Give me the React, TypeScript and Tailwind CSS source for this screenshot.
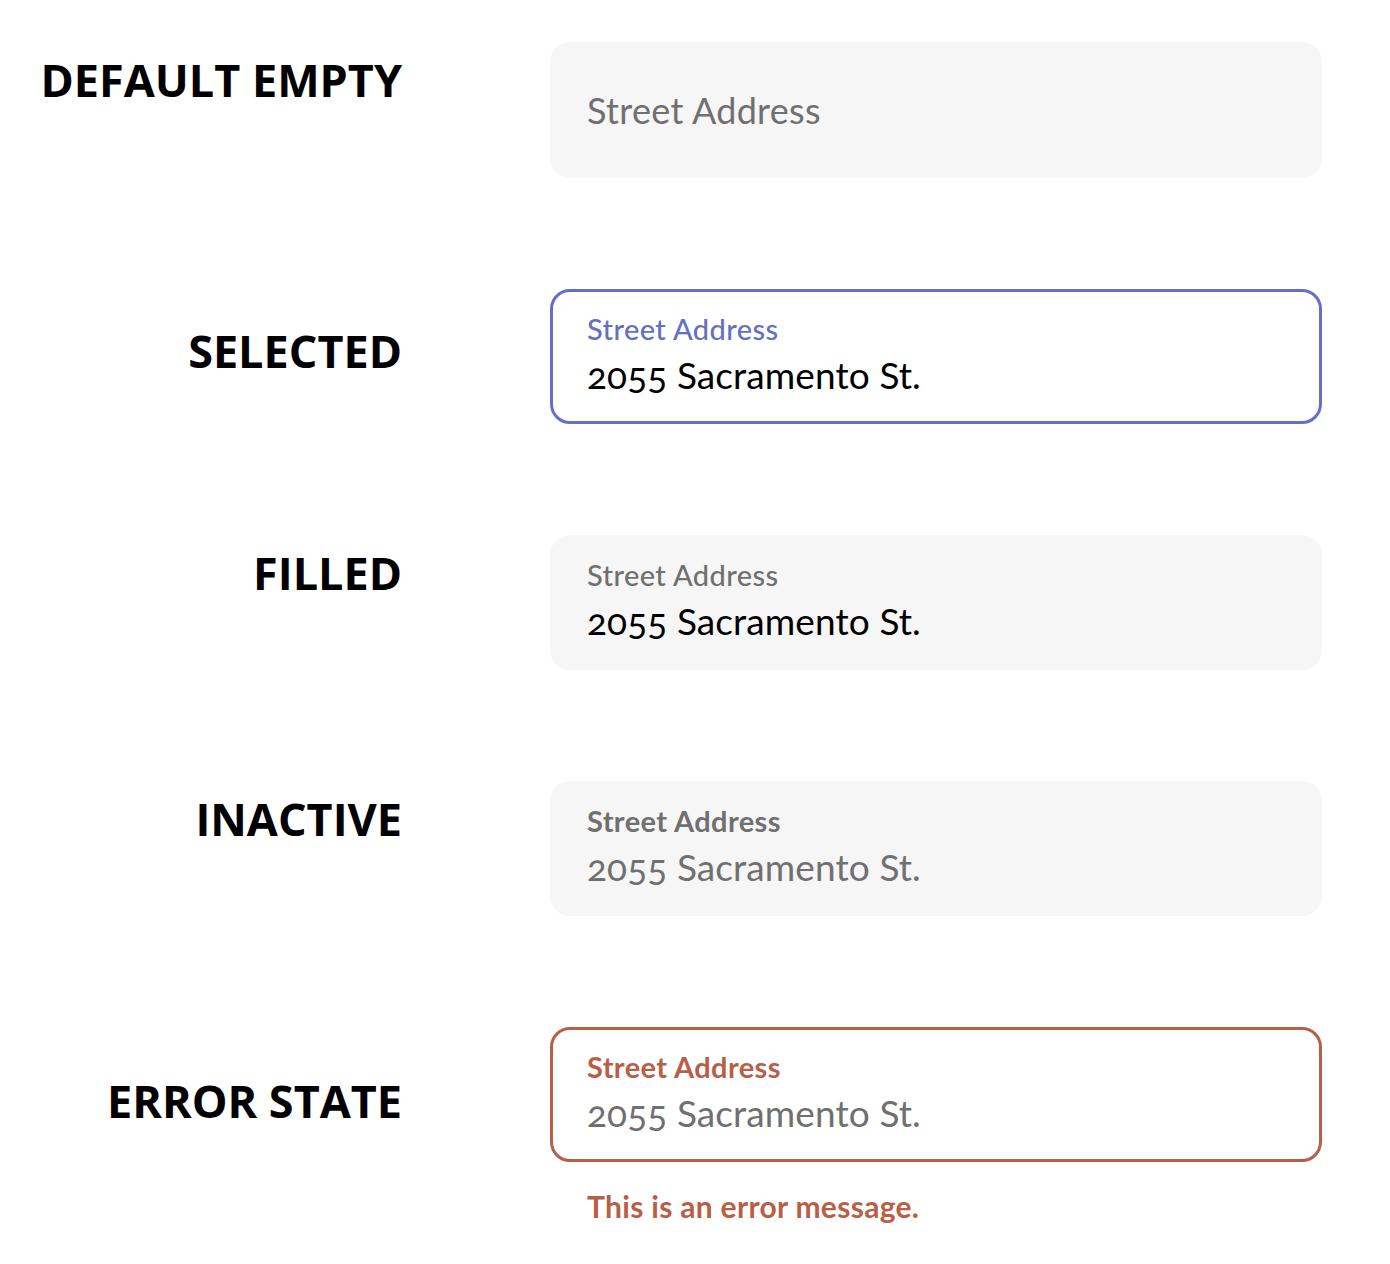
import React from "react"

type FieldState = "empty" | "selected" | "filled" | "inactive" | "error"

const rows: { label: string; state: FieldState; labelPad: string }[] = [
  { label: "DEFAULT EMPTY", state: "empty", labelPad: "pt-[10px]" },
  { label: "SELECTED", state: "selected", labelPad: "pt-[34px]" },
  { label: "FILLED", state: "filled", labelPad: "pt-[10px]" },
  { label: "INACTIVE", state: "inactive", labelPad: "pt-[10px]" },
  { label: "ERROR STATE", state: "error", labelPad: "pt-[46px]" },
]

function Field({ state }: { state: FieldState }) {
  if (state === "empty") {
    return (
      <div className="h-[136px] w-[772px] rounded-[20px] bg-[#f6f6f6] px-[37px] flex items-center">
        <span className="text-[36px] text-[#707070] tracking-[0.3px]">Street Address</span>
      </div>
    )
  }

  const box =
    state === "selected"
      ? "border-[3px] border-[#6470c4] bg-white px-[34px] pt-[19px]"
      : state === "error"
        ? "border-[3px] border-[#b85f48] bg-white px-[34px] pt-[19px]"
        : "bg-[#f6f6f6] px-[37px] pt-[22px]"

  const labelColor =
    state === "selected"
      ? "text-[#6470c4] font-medium"
      : state === "error"
        ? "text-[#b85f48] font-bold"
        : state === "inactive"
          ? "text-[#707070] font-bold"
          : "text-[#707070] font-medium"

  const valueColor = state === "selected" || state === "filled" ? "text-black" : "text-[#707070]"

  return (
    <div className={`h-[135px] w-[772px] rounded-[20px] ${box}`}>
      <div className={`text-[29px] leading-[36px] tracking-[0.4px] ${labelColor}`}>Street Address</div>
      <div className={`mt-[6px] text-[37px] leading-[44px] tracking-[0.1px] oldstyle-nums ${valueColor}`}>
        2055 Sacramento St.
      </div>
    </div>
  )
}

export default function App() {
  return (
    <div className="min-h-screen bg-white pt-[42px] font-['Lato','Noto_Sans',sans-serif]">
      <div className="flex flex-col gap-[111px]">
        {rows.map((r) => (
          <div key={r.label} className="flex">
            <div className={`w-[402px] text-right ${r.labelPad}`}>
              <h2 className="font-['Open_Sans','Noto_Sans',sans-serif] text-[45px] leading-[56px] font-bold text-black">
                {r.label}
              </h2>
            </div>
            <div className="ml-[148px] flex flex-col">
              <Field state={r.state} />
              {r.state === "error" && (
                <p className="mt-[22px] pl-[37px] text-[30px] tracking-[0.3px] font-bold text-[#b85f48]">
                  This is an error message.
                </p>
              )}
            </div>
          </div>
        ))}
      </div>
    </div>
  )
}
